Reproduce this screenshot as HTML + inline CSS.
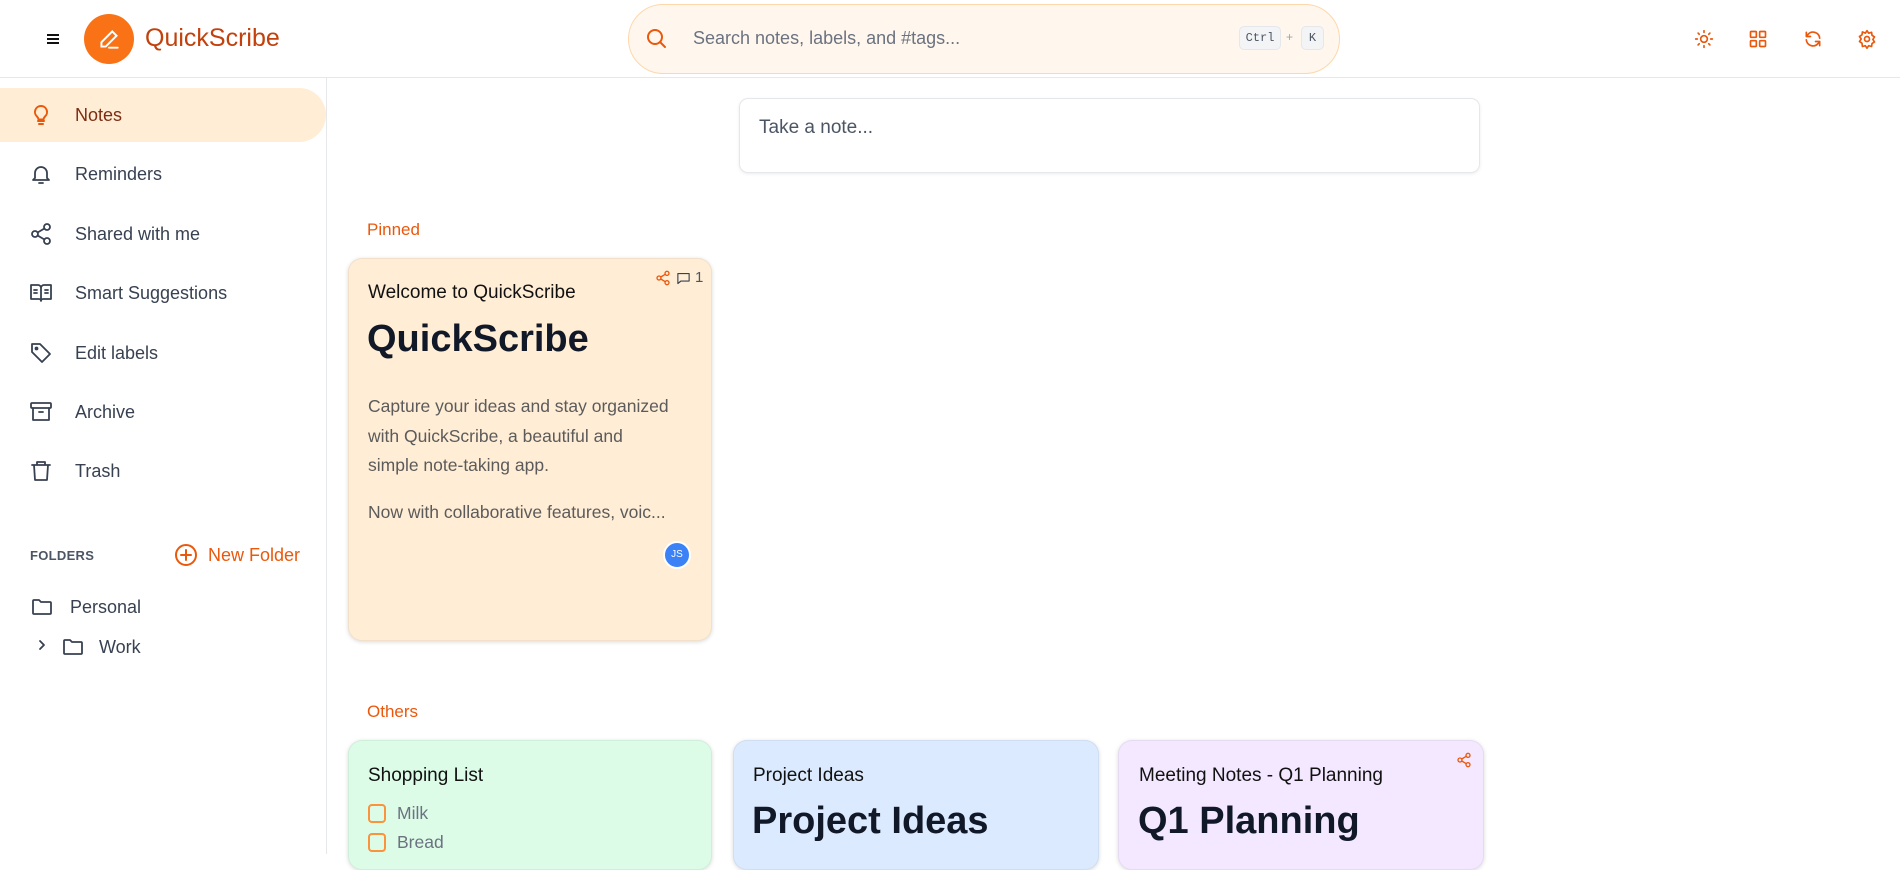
<!DOCTYPE html>
<html><head><meta charset="utf-8"><style>
*{box-sizing:border-box;margin:0;padding:0}
body{width:1900px;height:854px;overflow:hidden;background:#fff;font-family:"Liberation Sans",sans-serif;position:relative;color:#1f2937}
.abs{position:absolute}
header{position:absolute;left:0;top:0;width:1900px;height:78px;border-bottom:1px solid #e5e7eb;background:#fff}
.side{position:absolute;left:0;top:78px;width:327px;height:776px;border-right:1px solid #e5e7eb}
.item{position:absolute;left:0;width:326px;height:54px;display:flex;align-items:center;font-size:18px;color:#374151}
.item svg{position:absolute;left:29px}
.item span{position:absolute;left:75px}
.active{background:#ffedd5;border-radius:0 27px 27px 0;color:#7c2d12}
.card{position:absolute;border-radius:14px;box-shadow:0 1px 4px rgba(0,0,0,.15);border:1px solid rgba(0,0,0,.05)}
.ic{stroke:#ea580c;fill:none;stroke-width:2;stroke-linecap:round;stroke-linejoin:round}
.gi{stroke:#374151;fill:none;stroke-width:1.8;stroke-linecap:round;stroke-linejoin:round}
</style></head><body>
<header>
 <svg class="abs" style="left:44px;top:30px" width="18" height="18" viewBox="0 0 18 18"><path d="M3 5h12M3 9h12M3 13h12" stroke="#111" stroke-width="2"/></svg>
 <div class="abs" style="left:84px;top:14px;width:50px;height:50px;border-radius:50%;background:#f97316"></div>
 <svg class="abs" style="left:96px;top:26px" width="26" height="26" viewBox="0 0 24 24" fill="none" stroke="#fff" stroke-width="1.8" stroke-linecap="round"><path d="M15 5l4 4L9 19H5v-4z"/><path d="M12 20h8"/></svg>
 <div class="abs" style="left:145px;top:24px;font-size:25px;color:#c2410c">QuickScribe</div>
 <div class="abs" style="left:628px;top:4px;width:712px;height:70px;border-radius:35px;background:#fff7ed;border:1px solid #fed7aa"></div>
 <svg class="abs" style="left:644px;top:26px" width="24" height="24" viewBox="0 0 24 24"><circle cx="11" cy="11" r="7" stroke="#ea580c" stroke-width="2" fill="none"/><path d="M16 16l5 5" stroke="#ea580c" stroke-width="2" stroke-linecap="round"/></svg>
 <div class="abs" style="left:693px;top:28px;font-size:18px;color:#6b7280">Search notes, labels, and #tags...</div>
 <div class="abs" style="left:1239px;top:26px;width:42px;height:24px;border:1px solid #e5e7eb;background:#f3f4f6;border-radius:5px;font:12px 'Liberation Mono',monospace;color:#4b5563;text-align:center;line-height:22px">Ctrl</div>
 <div class="abs" style="left:1286px;top:30px;font-size:12px;color:#9ca3af">+</div>
 <div class="abs" style="left:1301px;top:26px;width:23px;height:24px;border:1px solid #e5e7eb;background:#f3f4f6;border-radius:5px;font:12px 'Liberation Mono',monospace;color:#4b5563;text-align:center;line-height:22px">K</div>
 <svg class="abs ic" style="left:1694px;top:29px" width="20" height="20" viewBox="0 0 24 24"><circle cx="12" cy="12" r="4"/><path d="M12 2v2M12 20v2M4.9 4.9l1.4 1.4M17.7 17.7l1.4 1.4M2 12h2M20 12h2M4.9 19.1l1.4-1.4M17.7 6.3l1.4-1.4"/></svg>
 <svg class="abs ic" style="left:1748px;top:29px" width="20" height="20" viewBox="0 0 24 24"><rect x="3" y="3" width="7" height="7" rx="1"/><rect x="14" y="3" width="7" height="7" rx="1"/><rect x="3" y="14" width="7" height="7" rx="1"/><rect x="14" y="14" width="7" height="7" rx="1"/></svg>
 <svg class="abs ic" style="left:1803px;top:29px" width="20" height="20" viewBox="0 0 24 24"><path d="M20 11a8 8 0 0 0-14-4.5L4 9M4 13a8 8 0 0 0 14 4.5l2-2.5M4 4v5h5M20 20v-5h-5"/></svg>
 <svg class="abs ic" style="left:1857px;top:29px" width="20" height="20" viewBox="0 0 24 24"><circle cx="12" cy="12" r="3"/><path d="M12 2l2 3 3.5-1 .5 3.5 3 2-2 3 2 3-3 2-.5 3.5-3.5-1-2 3-2-3-3.5 1L6 17l-3-2 2-3-2-3 3-2 .5-3.5L10 5z"/></svg>
</header>
<div class="side">
 <div class="item active" style="top:10px"><svg width="24" height="24" viewBox="0 0 24 24" class="ic"><path d="M9 18h6M10 21h4M12 3a6 6 0 0 0-4 10.5c1 1 1.5 2 1.5 3h5c0-1 .5-2 1.5-3A6 6 0 0 0 12 3z"/></svg><span>Notes</span></div>
 <div class="item" style="top:69px"><svg width="24" height="24" viewBox="0 0 24 24" class="gi"><path d="M6 16V11a6 6 0 0 1 12 0v5l2 2H4zM10 21h4"/></svg><span>Reminders</span></div>
 <div class="item" style="top:129px"><svg width="24" height="24" viewBox="0 0 24 24" class="gi"><circle cx="18" cy="5" r="3"/><circle cx="6" cy="12" r="3"/><circle cx="18" cy="19" r="3"/><path d="M8.6 13.5l6.8 4M15.4 6.5l-6.8 4"/></svg><span>Shared with me</span></div>
 <div class="item" style="top:188px"><svg width="24" height="24" viewBox="0 0 24 24" class="gi"><path d="M2 4h7a3 3 0 0 1 3 3v13a2 2 0 0 0-2-2H2zM22 4h-7a3 3 0 0 0-3 3v13a2 2 0 0 1 2-2h8zM5 9h3M5 12h3M16 9h3M16 12h3"/></svg><span>Smart Suggestions</span></div>
 <div class="item" style="top:248px"><svg width="24" height="24" viewBox="0 0 24 24" class="gi"><path d="M3 3h8l10 10-8 8L3 11z"/><circle cx="7.5" cy="7.5" r="1"/></svg><span>Edit labels</span></div>
 <div class="item" style="top:307px"><svg width="24" height="24" viewBox="0 0 24 24" class="gi"><rect x="2" y="3" width="20" height="5" rx="1"/><path d="M4 8v12h16V8M10 12h4"/></svg><span>Archive</span></div>
 <div class="item" style="top:366px"><svg width="24" height="24" viewBox="0 0 24 24" class="gi"><path d="M3 6h18M8 6V3h8v3M5 6l1 15h12l1-15"/></svg><span>Trash</span></div>
 <div class="abs" style="left:30px;top:470px;font-size:13px;font-weight:bold;color:#4b5563;letter-spacing:.3px">FOLDERS</div>
 <svg class="abs ic" style="left:174px;top:465px" width="24" height="24" viewBox="0 0 24 24"><circle cx="12" cy="12" r="10"/><path d="M12 7v10M7 12h10"/></svg>
 <div class="abs" style="left:208px;top:467px;font-size:18px;color:#ea580c">New Folder</div>
 <svg class="abs gi" style="left:30px;top:517px" width="24" height="24" viewBox="0 0 24 24"><path d="M3 6a1 1 0 0 1 1-1h5l2 2h9a1 1 0 0 1 1 1v10a1 1 0 0 1-1 1H4a1 1 0 0 1-1-1z"/></svg>
 <div class="abs" style="left:70px;top:519px;font-size:18px;color:#374151">Personal</div>
 <svg class="abs gi" style="left:35px;top:560px" width="14" height="14" viewBox="0 0 14 14"><path d="M5 3l4 4-4 4"/></svg>
 <svg class="abs gi" style="left:61px;top:557px" width="24" height="24" viewBox="0 0 24 24"><path d="M3 6a1 1 0 0 1 1-1h5l2 2h9a1 1 0 0 1 1 1v10a1 1 0 0 1-1 1H4a1 1 0 0 1-1-1z"/></svg>
 <div class="abs" style="left:99px;top:559px;font-size:18px;color:#374151">Work</div>
</div>
<div class="abs" style="left:739px;top:98px;width:741px;height:75px;border:1px solid #e5e7eb;border-radius:9px;box-shadow:0 1px 3px rgba(0,0,0,.08)"></div>
<div class="abs" style="left:759px;top:117px;font-size:19px;color:#4b5563">Take a note...</div>
<div class="abs" style="left:367px;top:220px;font-size:17px;color:#ea580c">Pinned</div>
<div class="card" style="left:348px;top:258px;width:364px;height:383px;background:#ffedd5"></div>
<svg class="abs ic" style="left:655px;top:270px" width="16" height="16" viewBox="0 0 24 24"><circle cx="18" cy="5" r="3"/><circle cx="6" cy="12" r="3"/><circle cx="18" cy="19" r="3"/><path d="M8.6 13.5l6.8 4M15.4 6.5l-6.8 4"/></svg>
<svg class="abs gi" style="left:676px;top:271px" width="15" height="15" viewBox="0 0 24 24"><path d="M3 4h18v12H8l-5 4z"/></svg>
<div class="abs" style="left:695px;top:269px;font-size:15px;color:#4b5563">1</div>
<div class="abs" style="left:368px;top:282px;font-size:19px;color:#111">Welcome to QuickScribe</div>
<div class="abs" style="left:367px;top:318px;font-size:38px;font-weight:bold;color:#111827">QuickScribe</div>
<div class="abs" style="left:368px;top:392px;width:305px;font-size:17.5px;line-height:29.5px;color:#5b5b5b">Capture your ideas and stay organized with QuickScribe, a beautiful and simple note-taking app.</div>
<div class="abs" style="left:368px;top:502px;font-size:17.5px;color:#5b5b5b;white-space:nowrap">Now with collaborative features, voic...</div>
<div class="abs" style="left:663px;top:541px;width:28px;height:28px;border-radius:50%;background:#3b82f6;border:2px solid #fff;color:#fff;font-size:10px;text-align:center;line-height:24px">JS</div>
<div class="abs" style="left:367px;top:702px;font-size:17px;color:#ea580c">Others</div>
<div class="card" style="left:348px;top:740px;width:364px;height:130px;background:#dcfce7"></div>
<div class="card" style="left:733px;top:740px;width:366px;height:130px;background:#dbeafe"></div>
<div class="card" style="left:1118px;top:740px;width:366px;height:130px;background:#f3e8ff"></div>
<div class="abs" style="left:368px;top:765px;font-size:19px;color:#111">Shopping List</div>
<div class="abs" style="left:368px;top:804px;width:18px;height:19px;border:2px solid #fb923c;border-radius:4px"></div>
<div class="abs" style="left:397px;top:803px;font-size:17.5px;color:#6b7280">Milk</div>
<div class="abs" style="left:368px;top:833px;width:18px;height:19px;border:2px solid #fb923c;border-radius:4px"></div>
<div class="abs" style="left:397px;top:832px;font-size:17.5px;color:#6b7280">Bread</div>
<div class="abs" style="left:753px;top:765px;font-size:19px;color:#111">Project Ideas</div>
<div class="abs" style="left:752px;top:800px;font-size:38px;font-weight:bold;color:#111827">Project Ideas</div>
<div class="abs" style="left:1139px;top:765px;font-size:19px;color:#111">Meeting Notes - Q1 Planning</div>
<div class="abs" style="left:1138px;top:800px;font-size:38px;font-weight:bold;color:#111827">Q1 Planning</div>
<svg class="abs ic" style="left:1456px;top:752px" width="16" height="16" viewBox="0 0 24 24"><circle cx="18" cy="5" r="3"/><circle cx="6" cy="12" r="3"/><circle cx="18" cy="19" r="3"/><path d="M8.6 13.5l6.8 4M15.4 6.5l-6.8 4"/></svg>
</body></html>
